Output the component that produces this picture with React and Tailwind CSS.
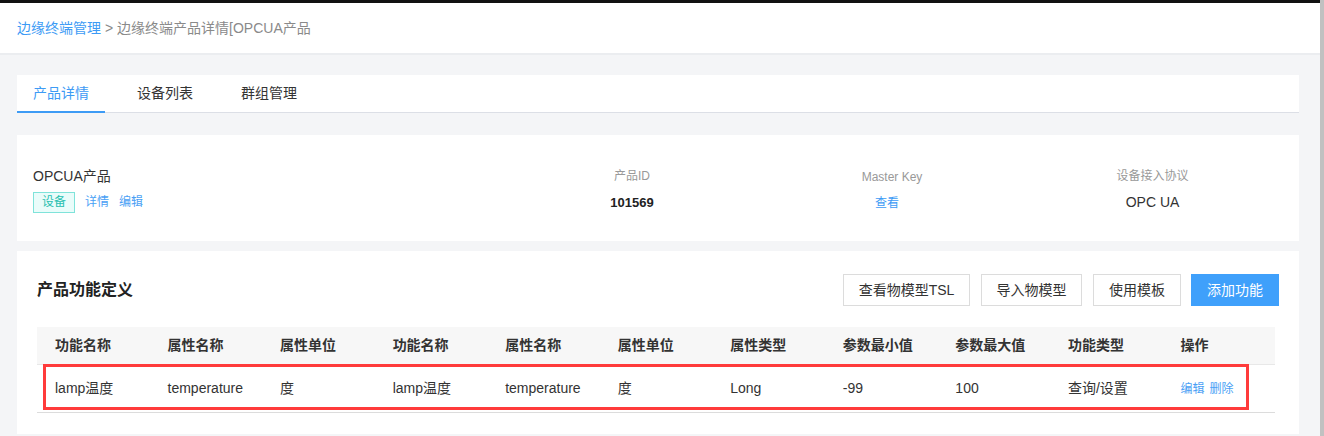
import React from 'react';

const font = { fontFamily: '"Liberation Sans", "Noto Sans CJK SC", sans-serif' };

const headers = ['功能名称', '属性名称', '属性单位', '功能名称', '属性名称', '属性单位', '属性类型', '参数最小值', '参数最大值', '功能类型', '操作'];
const row = ['lamp温度', 'temperature', '度', 'lamp温度', 'temperature', '度', 'Long', '-99', '100', '查询/设置'];

const App = () => {
  return (
    <div className="flex h-[436px] w-full overflow-hidden bg-[#f4f5f7] text-[#333]" style={font}>
      <div className="flex-1 flex flex-col">
        {/* top bar */}
        <div className="h-[3px] bg-[#111]" />
        <div className="h-[52px] bg-white border-b-2 border-[#ebedf0] flex items-center pl-[17px] text-[14px]">
          <span className="text-[#3d9bf5]">边缘终端管理</span>
          <span className="text-[#8a8a8a] ml-1">&gt; 边缘终端产品详情[OPCUA产品</span>
        </div>

        <div className="pl-[17px] pr-[21px] pt-[20px] flex flex-col">
          {/* Tabs */}
          <div className="bg-white h-[38px] border-b border-[#dcdfe6] flex items-end gap-4 text-[14px]">
            <div className="w-[88px] h-full flex items-center justify-center text-[#3d9bf5] border-b-2 border-[#3d9bf5] -mb-px">产品详情</div>
            <div className="w-[88px] h-full flex items-center justify-center text-[#333]">设备列表</div>
            <div className="w-[88px] h-full flex items-center justify-center text-[#333]">群组管理</div>
          </div>

          {/* Info card */}
          <div className="bg-white mt-[22px] h-[106px] flex items-center pl-4 pr-4">
            <div className="flex-1 flex flex-col pt-[3px]">
              <div className="text-[14px] text-[#333] leading-[18px]">OPCUA产品</div>
              <div className="flex items-center mt-[7px] text-[12px]">
                <span className="h-[21px] w-[42px] flex items-center justify-center border border-[#7fe3da] bg-[#e9fcfa] text-[#28bfb0]">设备</span>
                <span className="ml-[10px] text-[#4a9ff5]">详情</span>
                <span className="ml-[10px] text-[#4a9ff5]">编辑</span>
              </div>
            </div>
            <div className="w-[260px] flex flex-col items-center pt-[4px]">
              <div className="text-[12px] text-[#999] leading-[18px]">产品ID</div>
              <div className="text-[13px] font-bold text-[#222] mt-[8px]">101569</div>
            </div>
            <div className="w-[260px] flex flex-col items-center pt-[4px]">
              <div className="text-[12px] text-[#999] leading-[18px]">Master Key</div>
              <div className="text-[12px] text-[#3d9bf5] mt-[8px] pr-[10px]">查看</div>
            </div>
            <div className="w-[261px] flex flex-col items-center pt-[4px]">
              <div className="text-[12px] text-[#999] leading-[18px]">设备接入协议</div>
              <div className="text-[14px] text-[#333] mt-[7px]">OPC UA</div>
            </div>
          </div>

          {/* Function card */}
          <div className="bg-white mt-[10px] h-[183px] px-5 pt-[23px]">
            <div className="flex items-center justify-between h-[32px]">
              <div className="text-[16px] font-bold text-[#222]">产品功能定义</div>
              <div className="flex items-center gap-[11px] text-[14px]">
                <button className="h-[32px] w-[127px] border border-[#dcdcdc] bg-white text-[#333]">查看物模型TSL</button>
                <button className="h-[32px] w-[101px] border border-[#dcdcdc] bg-white text-[#333]">导入物模型</button>
                <button className="h-[32px] w-[88px] border border-[#dcdcdc] bg-white text-[#333]">使用模板</button>
                <button className="h-[32px] w-[88px] bg-[#3fa0fb] text-white -ml-px">添加功能</button>
              </div>
            </div>

            {/* Table */}
            <div className="relative mt-[21px] mr-[4px]">
              <div className="grid grid-cols-11 h-[38px] bg-[#f7f7f7] border-b border-[#e8e8e8] items-center text-[14px] font-bold text-[#333]">
                {headers.map((h, i) => (
                  <div key={i} className="pl-[18px]">{h}</div>
                ))}
              </div>
              <div className="grid grid-cols-11 h-[48px] border-b border-[#dcdcdc] items-center text-[14px] text-[#333]">
                {row.map((c, i) => (
                  <div key={i} className="pl-[18px]">{c}</div>
                ))}
                <div className="pl-[18px] text-[12px] text-[#4a9ff5] flex gap-[5px]">
                  <span>编辑</span>
                  <span>删除</span>
                </div>
              </div>
              {/* annotation highlight */}
              <div className="absolute left-[6px] top-[37px] w-[1206px] h-[46px] border-[3px] border-[#ff3b3b]" />
            </div>
          </div>
        </div>
      </div>
      {/* scrollbar strip */}
      <div className="w-[4px] bg-[#c1c1c1]" />
    </div>
  );
};

export default App;
